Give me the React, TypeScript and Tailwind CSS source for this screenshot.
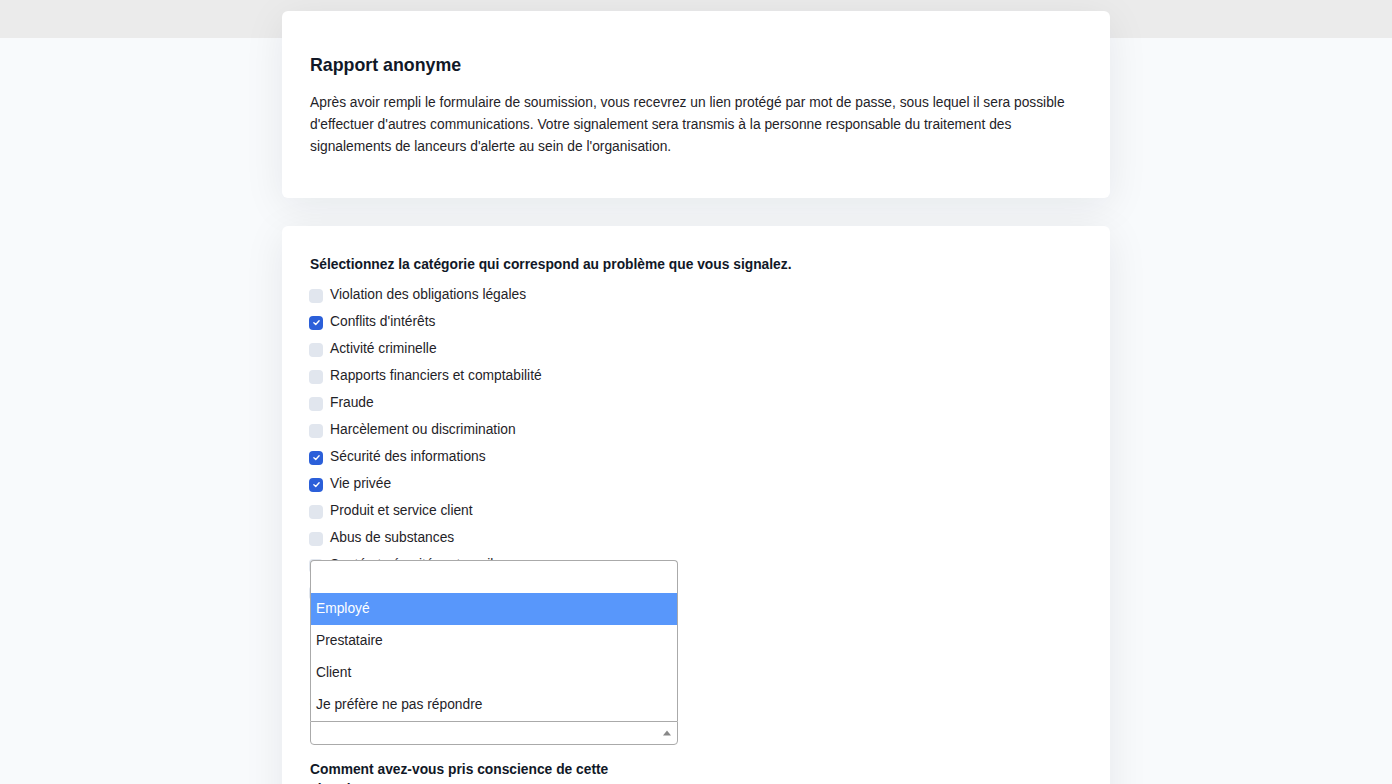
import React, { useState } from "react";

const categories = [
  { label: "Violation des obligations légales", checked: false },
  { label: "Conflits d'intérêts", checked: true },
  { label: "Activité criminelle", checked: false },
  { label: "Rapports financiers et comptabilité", checked: false },
  { label: "Fraude", checked: false },
  { label: "Harcèlement ou discrimination", checked: false },
  { label: "Sécurité des informations", checked: true },
  { label: "Vie privée", checked: true },
  { label: "Produit et service client", checked: false },
  { label: "Abus de substances", checked: false },
  { label: "Santé et sécurité au travail", checked: false },
  { label: "Autre", checked: false },
];

const relations = ["Employé", "Prestataire", "Client", "Je préfère ne pas répondre"];

function CheckItem({
  label,
  checked,
  onToggle,
}: {
  label: string;
  checked: boolean;
  onToggle: () => void;
}) {
  return (
    <label className="flex h-[27px] items-center gap-[7px] cursor-pointer" onClick={onToggle}>
      <span
        className={
          checked
            ? "-ml-px flex h-[14px] w-[14px] items-center justify-center rounded-[4px] bg-[#2b5fd9]"
            : "-ml-px h-[14px] w-[14px] rounded-[4px] bg-[#e1e6ee]"
        }
      >
        {checked && (
          <svg viewBox="0 0 12 12" className="h-[9px] w-[9px]">
            <path d="M2.5 6.3 L5 8.6 L9.5 3.6" fill="none" stroke="#fff" strokeWidth="1.8" strokeLinecap="round" strokeLinejoin="round" />
          </svg>
        )}
      </span>
      <span className="text-[13.8px] text-[#1f2328]">{label}</span>
    </label>
  );
}

export default function App() {
  const [checked, setChecked] = useState(categories.map((c) => c.checked));
  const [active, setActive] = useState(0);

  return (
    <div
      className="min-h-screen bg-[linear-gradient(#ebebeb_0,#ebebeb_38px,#f8fafc_38px)] pt-[11px] text-[#1f2328]"
      style={{ fontFamily: '"Liberation Sans", Arial, sans-serif' }}
    >
      <div className="mx-auto flex w-[828px] flex-col gap-[28px]">
        <section className="rounded-[6px] bg-white px-7 pt-[40px] pb-[40px] shadow-[0_8px_40px_rgba(15,23,42,0.08)]">
          <h1 className="text-[17.8px] leading-[28px] font-bold text-[#111827]">Rapport anonyme</h1>
          <p className="mt-[13px] text-[13.8px] leading-[22px] text-[#1f2328]">
            Après avoir rempli le formulaire de soumission, vous recevrez un lien protégé par mot de passe, sous
            lequel il sera possible d'effectuer d'autres communications. Votre signalement sera transmis à la
            personne responsable du traitement des signalements de lanceurs d'alerte au sein de l'organisation.
          </p>
        </section>

        <section className="rounded-[6px] bg-white px-7 pt-[29px] pb-10 shadow-[0_8px_40px_rgba(15,23,42,0.08)]">
          <h2 className="text-[13.8px] leading-[20px] font-bold text-[#111827]">
            Sélectionnez la catégorie qui correspond au problème que vous signalez.
          </h2>
          <div className="mt-[7px] flex flex-col">
            {categories.map((c, i) => (
              <CheckItem
                key={c.label}
                label={c.label}
                checked={checked[i]}
                onToggle={() => setChecked(checked.map((v, j) => (j === i ? !v : v)))}
              />
            ))}
          </div>

          <div className="mt-[89px] w-[368px]">
            <h3 className="text-[13.8px] leading-[20px] font-bold text-[#111827]">
              Quelle est votre relation avec l'organisation ?
            </h3>
            <div className="relative mt-[6px]">
              <div className="absolute bottom-full left-0 z-10 w-full rounded-t-[4px] border border-b-0 border-[#aaa] bg-white">
                <div className="h-[32px]" />
                {relations.map((r, i) => (
                  <div
                    key={r}
                    onMouseEnter={() => setActive(i)}
                    className={
                      i === active
                        ? "flex h-[32px] items-center bg-[#5897fb] px-[5px] text-[13.8px] text-white"
                        : "flex h-[32px] items-center px-[5px] text-[13.8px] text-[#1f2328]"
                    }
                  >
                    {r}
                  </div>
                ))}
              </div>
              <div className="relative h-[24px] rounded-b-[4px] border border-[#aaa] bg-white">
                <span className="absolute top-1/2 right-[6px] -translate-y-1/2 border-x-[4px] border-b-[5px] border-x-transparent border-b-[#888]" />
              </div>
            </div>
          </div>

          <div className="mt-[15px] w-[330px]">
            <h3 className="text-[13.8px] leading-[20px] font-bold text-[#111827]">
              Comment avez-vous pris conscience de cette situation ?
            </h3>
          </div>
        </section>
      </div>
    </div>
  );
}
